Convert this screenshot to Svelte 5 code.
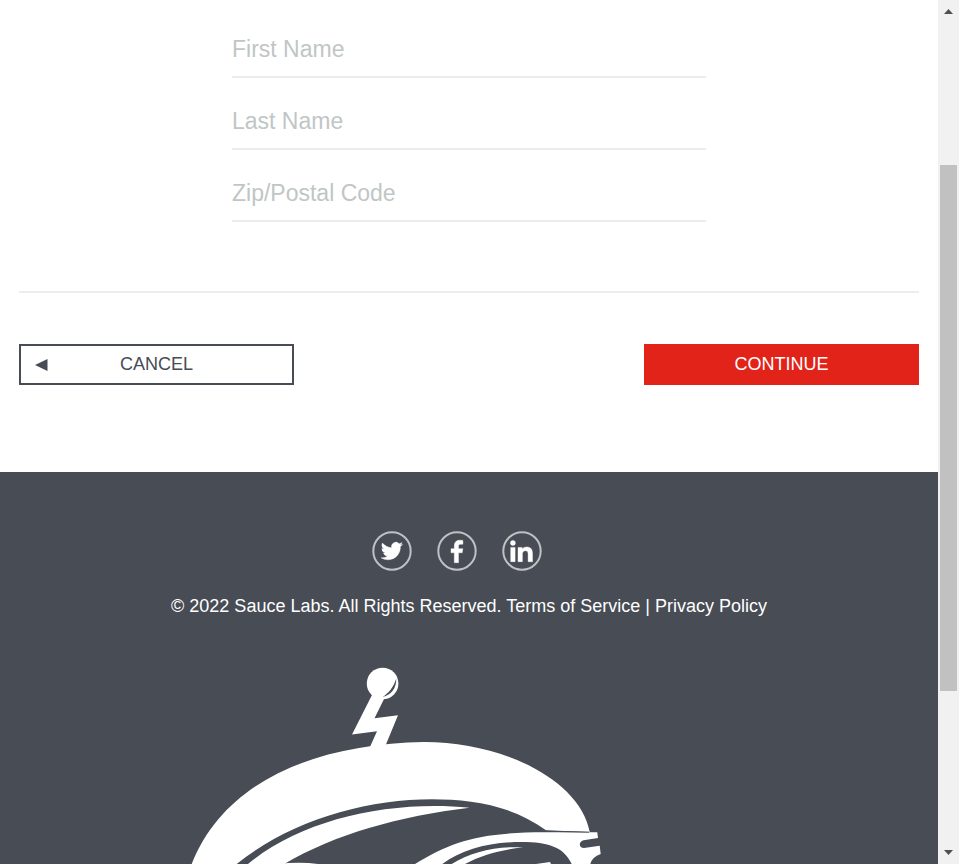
<script>
  let firstName = $state('');
  let lastName = $state('');
  let postalCode = $state('');
</script>

<div class="window">
  <div class="page">
    <main>
      <form onsubmit={(e) => e.preventDefault()}>
        <div class="fields">
          <input type="text" placeholder="First Name" aria-label="First Name" bind:value={firstName} />
          <input type="text" placeholder="Last Name" aria-label="Last Name" bind:value={lastName} />
          <input type="text" placeholder="Zip/Postal Code" aria-label="Zip/Postal Code" bind:value={postalCode} />
        </div>
        <div class="actions">
          <button type="button" class="cancel">
            <svg class="arrow" width="13" height="12" viewBox="0 0 13 12" aria-hidden="true"><path d="M0 6 12.500 0V12Z" fill="#474c55" /></svg>
            <span>CANCEL</span>
          </button>
          <button type="submit" class="continue">CONTINUE</button>
        </div>
      </form>
    </main>

    <footer>
      <ul class="social">
        <li>
          <a href="#twitter" aria-label="Twitter">
            <svg viewBox="0 0 40 40">
              <circle class="ring" cx="20" cy="20" r="18.700" />
              <path class="glyph" transform="translate(9 9.200) scale(.9)" d="M23.953 4.570a10 10 0 01-2.825.775 4.958 4.958 0 002.163-2.723c-.951.555-2.005.959-3.127 1.184a4.920 4.920 0 00-8.384 4.482C7.690 8.095 4.067 6.130 1.640 3.162a4.822 4.822 0 00-.666 2.475c0 1.710.87 3.213 2.188 4.096a4.904 4.904 0 01-2.228-.616v.06a4.923 4.923 0 003.946 4.827 4.996 4.996 0 01-2.212.085 4.936 4.936 0 004.604 3.417 9.867 9.867 0 01-6.102 2.105c-.39 0-.779-.023-1.170-.067a13.995 13.995 0 007.557 2.209c9.053 0 13.998-7.496 13.998-13.985 0-.21 0-.42-.015-.63A9.935 9.935 0 0024 4.590z" />
            </svg>
          </a>
        </li>
        <li>
          <a href="#facebook" aria-label="Facebook">
            <svg viewBox="0 0 40 40">
              <circle class="ring" cx="20" cy="20" r="18.700" />
              <path class="glyph" d="M17.300 31.700V21.800H14V17.700H17.300V14.800C17.300 11.200 19.400 9.200 22.700 9.200C24.200 9.200 25.300 9.300 25.900 9.400V13.200H23.600C22 13.200 21.500 14 21.500 15.200V17.700H25.800L25.200 21.800H21.500V31.700Z" />
            </svg>
          </a>
        </li>
        <li>
          <a href="#linkedin" aria-label="LinkedIn">
            <svg viewBox="0 0 40 40">
              <circle class="ring" cx="20" cy="20" r="18.700" />
              <circle class="glyph" cx="10.900" cy="11.900" r="2.500" />
              <path class="glyph" d="M8.700 16.400H13.100V30.700H8.700ZM16 16.400H20.200V18.300C21 16.800 22.700 16 24.800 16C29 16 30.500 18.800 30.500 22.500V30.700H26.100V23.400C26.100 21.400 25.800 19.800 23.500 19.800C21.100 19.800 20.400 21.400 20.400 23.300V30.700H16Z" />
            </svg>
          </a>
        </li>
      </ul>

      <p>© 2022 Sauce Labs. All Rights Reserved. Terms of Service | Privacy Policy</p>

      <svg class="robot" viewBox="179 655 580 209" role="img" aria-label="Swag bot">
        <g fill="#fff">
          <circle cx="382.600" cy="683.500" r="15.800" />
          <path d="M372.500 694 352 734.400 377 731.300 369.500 748H384.500L398 715.300 374.500 718.300 385.500 696Z" />
          <path d="M191.700 864C226 777 322 744 424 742C503 742 580 780 589.700 832L546 830.300C512 805 470 799.300 432 799.300C365 799.300 290 821 236.700 864Z" />
          <path d="M248 864C302 819 390 800 469.500 807.700C400 816 335 834 284.300 864Z" />
          <path d="M277 864Q300 861.500 318 864Z" />
          <path d="M415 864C452 841 480 832.300 545 832.300H597.300L598 838 583.500 840.300C578.500 841.500 578.500 848 584 848L599.700 845.700 600.700 854Q592 857 590.300 864H571.700C564 847 548 842 522 842C490 842 463 849 442.300 864Z" />
          <path d="M451.700 864C471 852 496 846 523.300 847.300C500 850 482 855 465 864Z" />
          <path d="M536 864 550 862 551 864Z" />
        </g>
        <path d="M396.300 678.500C396.500 688 391.500 695 382.500 697C389 693 393.500 687 396.300 678.500Z" fill="#474c55" />
        <path d="M545 831.200 589 832.200" stroke="#474c55" fill="none" />
      </svg>
    </footer>
  </div>

  <div class="scrollbar" aria-hidden="true">
    <svg width="9" height="5" viewBox="0 0 9 5"><path d="M0 5 4.500 0 9 5Z" /></svg>
    <div class="track"><div class="thumb"></div></div>
    <svg width="9" height="5" viewBox="0 0 9 5"><path d="M0 0H9L4.500 5Z" /></svg>
  </div>
</div>

<style>
  .window {
    display: flex;
    height: 100vh;
    overflow: hidden;
    background: #fff;
    font-family: "Liberation Sans", Arial, sans-serif;
  }

  .page {
    flex: 1;
    min-width: 0;
    display: flex;
    flex-direction: column;
  }

  main {
    padding: 20px 19px 87px;
  }

  form {
    display: flex;
    flex-direction: column;
  }

  .fields {
    display: flex;
    flex-direction: column;
    gap: 14px;
    width: 100%;
    max-width: 474px;
    margin: 0 auto;
    padding-bottom: 69px;
  }

  input {
    box-sizing: border-box;
    width: 100%;
    height: 58px;
    padding: 2px 0 0;
    border: 0;
    border-bottom: 2px solid #ededed;
    border-radius: 0;
    background: transparent;
    color: #474c55;
    font: 23px "Liberation Sans", Arial, sans-serif;
    outline: none;
  }

  input::placeholder {
    color: #c0c6c5;
    opacity: 1;
  }

  .actions {
    display: flex;
    justify-content: space-between;
    padding-top: 51px;
    border-top: 2px solid #ededed;
  }

  button {
    box-sizing: border-box;
    width: 275px;
    height: 41px;
    padding: 0 14px;
    border: 0;
    font: 18px "Liberation Sans", Arial, sans-serif;
    cursor: pointer;
  }

  .cancel {
    display: flex;
    align-items: center;
    border: 2px solid #474c55;
    background: #fff;
    color: #474c55;
  }

  .cancel span {
    flex: 1;
    padding-right: 13px;
  }

  .continue {
    background: #e2231a;
    color: #fff;
  }

  footer {
    flex: 1;
    display: flex;
    flex-direction: column;
    align-items: center;
    padding-top: 59px;
    background: #474c55;
    color: #fff;
  }

  .social {
    display: flex;
    margin: 0;
    padding: 0;
    list-style: none;
  }

  .social li {
    margin-right: 25px;
  }

  .social a,
  .social svg {
    display: block;
    width: 40px;
    height: 40px;
    fill: #fff;
  }

  .social .ring {
    fill: none;
    stroke: #bfc1c4;
    stroke-width: 2px;
  }

  .social .glyph {
    stroke: #fff;
    stroke-opacity: 0.4;
    stroke-width: 1px;
  }

  p {
    margin: 24px 0 38px;
    font-size: 18px;
    line-height: 22px;
    text-align: center;
  }

  .robot {
    flex: none;
    width: 100%;
    max-width: 580px;
  }

  .scrollbar {
    flex: none;
    box-sizing: border-box;
    width: 21px;
    padding: 9px 2px;
    display: flex;
    flex-direction: column;
    align-items: center;
    background: #f1f1f1;
  }

  .scrollbar svg {
    fill: #505050;
  }

  .track {
    flex: 1;
    width: 100%;
    padding-top: 151px;
  }

  .thumb {
    height: 526px;
    background: #c1c1c1;
  }
</style>
